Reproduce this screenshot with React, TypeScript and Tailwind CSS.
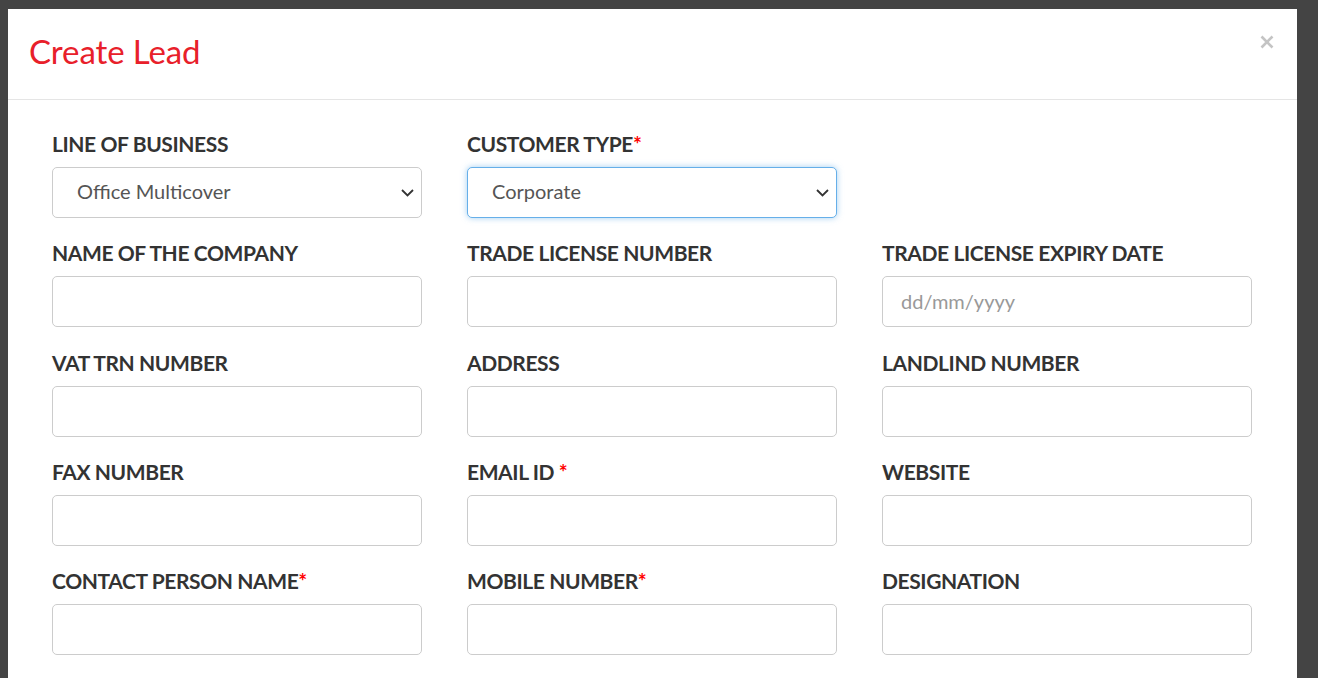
type Field = {
  label: string;
  required?: "tight" | "spaced";
  kind?: "select" | "date" | "text";
  value?: string;
  focused?: boolean;
};

const rows: (Field | null)[][] = [
  [
    { label: "LINE OF BUSINESS", kind: "select", value: "Office Multicover" },
    { label: "CUSTOMER TYPE", required: "tight", kind: "select", value: "Corporate", focused: true },
    null,
  ],
  [
    { label: "NAME OF THE COMPANY" },
    { label: "TRADE LICENSE NUMBER" },
    { label: "TRADE LICENSE EXPIRY DATE", kind: "date" },
  ],
  [{ label: "VAT TRN NUMBER" }, { label: "ADDRESS" }, { label: "LANDLIND NUMBER" }],
  [{ label: "FAX NUMBER" }, { label: "EMAIL ID", required: "spaced" }, { label: "WEBSITE" }],
  [
    { label: "CONTACT PERSON NAME", required: "tight" },
    { label: "MOBILE NUMBER", required: "tight" },
    { label: "DESIGNATION" },
  ],
];

function FormField({ field }: { field: Field }) {
  return (
    <div className="flex flex-col">
      <label className="text-[21px] leading-6 font-bold text-[#333] tracking-[-0.4px] mb-[11px]">
        {field.label}
        {field.required === "spaced" && " "}
        {field.required && <span className="text-[#f00]">*</span>}
      </label>
      {field.kind === "select" ? (
        <div
          className={
            "relative h-[51px] rounded-[5px] border bg-white flex items-center pl-6 pr-[7px] " +
            (field.focused
              ? "border-[#66afe9] shadow-[0_0_6px_rgba(102,175,233,0.6)]"
              : "border-[#ccc]")
          }
        >
          <span className="flex-1 text-[20px] text-[#555] pb-[3px]">{field.value}</span>
          <svg width="13" height="8" viewBox="0 0 13 8" fill="none">
            <path d="M1 1l5.5 5.5L12 1" stroke="#333" strokeWidth="1.8" />
          </svg>
        </div>
      ) : (
        <input
          type="text"
          placeholder={field.kind === "date" ? "dd/mm/yyyy" : ""}
          className="h-[51px] rounded-[5px] border border-[#ccc] bg-white px-[18px] pb-[2px] text-[20px] text-[#555] placeholder:text-[#999] outline-none"
        />
      )}
    </div>
  );
}

export default function App() {
  return (
    <div className="h-[678px] overflow-hidden bg-[#444] pt-[9px] pl-2 pr-[21px] font-['Lato','Open_Sans',sans-serif]">
      <div className="bg-white h-full">
        <div className="relative h-[91px] border-b border-[#e5e5e5] flex items-center pl-[21px]">
          <h1 className="text-[33px] text-[#e8202a] font-normal tracking-[-0.1px] -mt-[4px]">Create Lead</h1>
          <svg
            className="absolute right-[23px] top-[26px]"
            width="14"
            height="14"
            viewBox="0 0 14 14"
          >
            <path d="M1.5 1.5l11 11M12.5 1.5l-11 11" stroke="#c4c4c4" strokeWidth="2.6" />
          </svg>
        </div>
        <div className="px-[44px] pt-[32px]">
          <div className="flex flex-col gap-[23.3px] w-[1200px]">
            {rows.map((row, i) => (
              <div key={i} className="grid grid-cols-3 gap-x-[45px]">
                {row.map((f, j) => (f ? <FormField key={j} field={f} /> : <div key={j} />))}
              </div>
            ))}
          </div>
        </div>
      </div>
    </div>
  );
}
